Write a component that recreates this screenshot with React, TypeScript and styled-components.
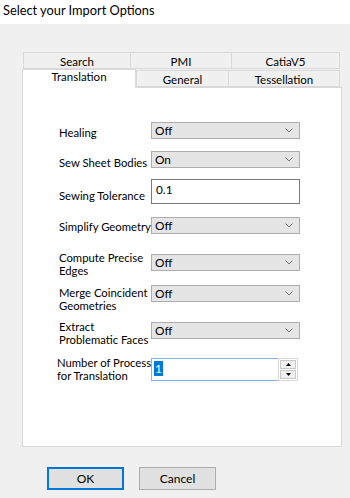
import styled, { createGlobalStyle } from "styled-components";

const Global = createGlobalStyle`
  html, body {
    margin: 0;
    padding: 0;
    background: #f0f0f0;
  }
  * { box-sizing: border-box; }
`

const Window = styled.div`
  width: 350px;
  height: 498px;
  background: #f0f0f0;
  font-family: Lato, "Noto Sans", sans-serif;
  color: #000;
  overflow: hidden;
`

const TitleBar = styled.div`
  height: 24px;
  background: #fff;
  padding-left: 3px;
  font-size: 12.8px;
  line-height: 21px;
`

const Body = styled.div`
  padding: 27px 8px 0 22px;
`

const TabRow = styled.div<{ $inset?: number }>`
  display: flex;
  height: 18px;
  align-items: flex-end;
  padding-left: ${p => p.$inset ?? 0}px;
`

const Tab = styled.div<{ $w: number; $active?: boolean }>`
  width: ${p => p.$w}px;
  height: ${p => (p.$active ? 19 : 17)}px;
  margin-bottom: ${p => (p.$active ? -1 : 0)}px;
  background: ${p => (p.$active ? "#fff" : "#f0f0f0")};
  border: 1px solid #d9d9d9;
  border-bottom: ${p => (p.$active ? "none" : "1px solid #d9d9d9")};
  border-right: ${p => (p.$active ? "1px solid #d9d9d9" : "none")};
  & + & { border-left: 1px solid #d9d9d9; }
  &:last-child { border-right: 1px solid #d9d9d9; }
  font-size: 11.5px;
  line-height: ${p => (p.$active ? 14 : 17)}px;
  text-align: center;
  position: relative;
  z-index: ${p => (p.$active ? 2 : 1)};
`

const Panel = styled.div`
  width: 320px;
  height: 360px;
  background: #fff;
  border: 1px solid #d9d9d9;
  padding: 34px 0 0 36px;
  display: flex;
  flex-direction: column;
`

const Row = styled.div<{ $gap: number; $h?: number }>`
  display: flex;
  align-items: center;
  height: ${p => p.$h ?? 17}px;
  margin-top: ${p => p.$gap}px;
`

const Label = styled.div<{ $shift?: number; $indent?: number }>`
  width: 92px;
  flex: none;
  white-space: nowrap;
  font-size: 11.3px;
  line-height: 12.5px;
  position: relative;
  top: ${p => p.$shift ?? 0}px;
  left: ${p => p.$indent ?? 0}px;
`

const Select = styled.div`
  width: 149px;
  height: 17px;
  background: #e5e5e5;
  border: 1px solid #adadad;
  display: flex;
  align-items: center;
  justify-content: space-between;
  padding: 0 6px 0 3px;
  font-size: 11.8px;
`

const Chevron = () => (
  <svg width="8" height="5" viewBox="0 0 8 5">
    <path d="M0.5 0.5 L4 4 L7.5 0.5" fill="none" stroke="#7a7a7a" strokeWidth="1" />
  </svg>
)

const TextBox = styled.div`
  width: 149px;
  height: 25px;
  background: #fff;
  border: 1px solid #7a7a7a;
  padding: 3px 4px;
  font-size: 11.8px;
  line-height: 14px;
`

const SpinBox = styled.div`
  display: flex;
  width: 147px;
  height: 23px;
`

const SpinInput = styled.div`
  width: 127px;
  height: 23px;
  border: 1px solid #7eb4ea;
  border-right: none;
  background: #fff;
  padding: 2px 0 0 2px;
  font-size: 11.8px;
  line-height: 15px;
`

const Selected = styled.span`
  background: #0078d7;
  color: #fff;
  padding: 0 1px;
`

const SpinButtons = styled.div`
  width: 20px;
  display: flex;
  flex-direction: column;
  gap: 1px;
  padding: 1px;
  background: #fff;
  border: 1px solid #d9d9d9;
`

const SpinButton = styled.div`
  flex: 1;
  background: #f0f0f0;
  border: 1px solid #c8c8c8;
  display: flex;
  align-items: center;
  justify-content: center;
`

const Footer = styled.div`
  display: flex;
  gap: 15px;
  padding: 20px 0 0 25px;
`

const Button = styled.div<{ $primary?: boolean }>`
  width: 77px;
  height: 23px;
  background: #e1e1e1;
  border: ${p => (p.$primary ? "2px solid #0078d7" : "1px solid #adadad")};
  font-size: 12px;
  display: flex;
  align-items: center;
  justify-content: center;
`

type Opt = { label: string[]; value: string; gap: number; shift?: number }

const topRows: Opt[] = [
  { label: ["Healing"], value: "Off", gap: 0, shift: 3 },
  { label: ["Sew Sheet Bodies"], value: "On", gap: 12, shift: 4 },
]

const lowerRows: Opt[] = [
  { label: ["Compute Precise", "Edges"], value: "Off", gap: 20, shift: 2 },
  { label: ["Merge Coincident", "Geometries"], value: "Off", gap: 14, shift: 6 },
  { label: ["Extract", "Problematic Faces"], value: "Off", gap: 20, shift: 3 },
]

const OptionRow = ({ o }: { o: Opt }) => (
  <Row $gap={o.gap}>
    <Label $shift={o.shift}>
      {o.label.map((l, i) => (
        <div key={i}>{l}</div>
      ))}
    </Label>
    <Select>{o.value}<Chevron /></Select>
  </Row>
)

export default function App() {
  return (
    <Window>
      <Global />
      <TitleBar>Select your Import Options</TitleBar>
      <Body>
        <TabRow $inset={1}>
          <Tab $w={107}>Search</Tab>
          <Tab $w={101}>PMI</Tab>
          <Tab $w={109}>CatiaV5</Tab>
        </TabRow>
        <TabRow>
          <Tab $w={114} $active>Translation</Tab>
          <Tab $w={92}>General</Tab>
          <Tab $w={112}>Tessellation</Tab>
        </TabRow>
        <Panel>
          {topRows.map(o => <OptionRow key={o.label[0]} o={o} />)}
          <Row $gap={11} $h={25}>
            <Label $shift={5}>Sewing Tolerance</Label>
            <TextBox>0.1</TextBox>
          </Row>
          <OptionRow o={{ label: ["Simplify Geometry"], value: "Off", gap: 13, shift: 2 }} />
          {lowerRows.map(o => <OptionRow key={o.label[0]} o={o} />)}
          <Row $gap={19} $h={23}>
            <Label $indent={-2}>
              <div>Number of Process</div>
              <div>for Translation</div>
            </Label>
            <SpinBox>
              <SpinInput><Selected>1</Selected></SpinInput>
              <SpinButtons>
                <SpinButton>
                  <svg width="5" height="3" viewBox="0 0 5 3"><path d="M0 3 L2.5 0 L5 3 Z" fill="#000" /></svg>
                </SpinButton>
                <SpinButton>
                  <svg width="5" height="3" viewBox="0 0 5 3"><path d="M0 0 L2.5 3 L5 0 Z" fill="#000" /></svg>
                </SpinButton>
              </SpinButtons>
            </SpinBox>
          </Row>
        </Panel>
        <Footer>
          <Button $primary>OK</Button>
          <Button>Cancel</Button>
        </Footer>
      </Body>
    </Window>
  )
}
